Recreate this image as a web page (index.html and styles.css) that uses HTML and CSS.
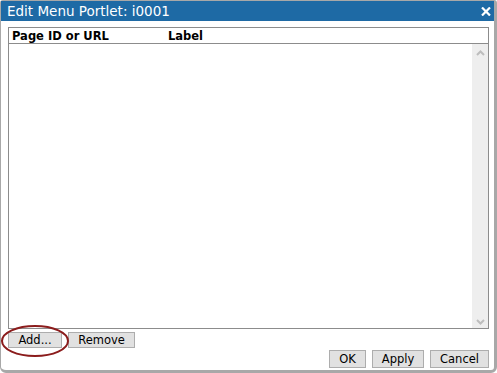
FILE: index.html
```html
<!DOCTYPE html>
<html lang="en">
<head>
  <meta charset="UTF-8">
  <title>Edit Menu Portlet</title>
  <link rel="stylesheet" href="styles.css">
</head>
<body>
<div class="dialog">
  <div class="titlebar">
    <span class="title">Edit Menu Portlet: i0001</span>
    <svg class="close" width="10" height="9" viewBox="0 0 10 9">
      <path d="M1 0.5 L9 8.5 M9 0.5 L1 8.5" stroke="#fff" stroke-width="2.2" fill="none"/>
    </svg>
  </div>
  <div class="content">
    <div class="grid">
      <div class="grid-head">
        <span class="col-page">Page ID or URL</span>
        <span class="col-label">Label</span>
      </div>
      <div class="grid-body">
        <div class="rows"></div>
        <div class="scrollbar">
          <svg width="9" height="6" viewBox="0 0 9 6"><path d="M1 5 L4.5 1.5 L8 5" stroke="#bdbdbd" stroke-width="2" fill="none"/></svg>
          <svg width="9" height="6" viewBox="0 0 9 6"><path d="M1 1 L4.5 4.5 L8 1" stroke="#bdbdbd" stroke-width="2" fill="none"/></svg>
        </div>
      </div>
    </div>
    <div class="grid-buttons">
      <span class="ring-wrap">
        <button class="btn btn-add">Add...</button>
        <svg class="ring" width="70" height="34" viewBox="0 0 70 34"><ellipse cx="35" cy="17" rx="33" ry="15" stroke="#8b1c1c" stroke-width="2" fill="none"/></svg>
      </span>
      <button class="btn btn-remove">Remove</button>
    </div>
    <div class="actions">
      <button class="btn btn-ok">OK</button>
      <button class="btn btn-apply">Apply</button>
      <button class="btn btn-cancel">Cancel</button>
    </div>
  </div>
</div>
</body>
</html>
```

FILE: styles.css
```css
body, html {
  margin: 0;
  background: #fff;
  font-family: "DejaVu Sans", Verdana, sans-serif;
}
.dialog {
  width: 497px;
  height: 373px;
  box-sizing: border-box;
  border: 1px solid #a8a8a8;
  border-right-width: 3px;
  border-bottom-width: 3px;
  border-radius: 3px 3px 6px 6px;
  display: flex;
  flex-direction: column;
  background: #fff;
}
.titlebar {
  height: 20px;
  background: #1e6aa5;
  display: flex;
  align-items: center;
  justify-content: space-between;
  padding: 0 2px 0 6px;
}
.title {
  color: #fff;
  font-size: 13.5px;
  letter-spacing: 0;
}
.close {
  margin-right: 1px;
  margin-top: 1px;
}
.content {
  flex: 1;
  display: flex;
  flex-direction: column;
  padding: 6px 5px 0 7px;
}
.grid {
  height: 302px;
  box-sizing: border-box;
  border: 1px solid #8c8c8c;
  display: flex;
  flex-direction: column;
}
.grid-head {
  height: 15px;
  border-bottom: 1px solid #8c8c8c;
  display: flex;
  align-items: center;
  font-size: 11.5px;
  font-weight: bold;
  color: #000;
}
.col-page {
  width: 156px;
  padding-left: 3px;
}
.grid-body {
  flex: 1;
  display: flex;
}
.rows {
  flex: 1;
}
.scrollbar {
  width: 16px;
  background: #eeeeee;
  display: flex;
  flex-direction: column;
  justify-content: space-between;
  align-items: center;
  padding: 6px 0 3px;
}
.grid-buttons {
  display: flex;
  gap: 6px;
  margin-top: 3px;
}
.ring-wrap {
  position: relative;
  display: inline-flex;
}
.ring {
  position: absolute;
  left: -8px;
  top: -8px;
}
.btn {
  font-family: "DejaVu Sans", Verdana, sans-serif;
  font-size: 11.5px;
  color: #000;
  background: #e1e1e1;
  border: 1px solid #adadad;
  height: 16px;
  padding: 0;
  margin: 0;
  line-height: 14px;
}
.btn-add { width: 54px; }
.btn-remove { width: 67px; }
.actions {
  display: flex;
  justify-content: flex-end;
  gap: 6px;
  margin-top: 2px;
  padding-right: 0;
}
.btn-ok { width: 37px; height: 18px; }
.btn-apply { width: 52px; height: 18px; }
.btn-cancel { width: 59px; height: 18px; }
```
